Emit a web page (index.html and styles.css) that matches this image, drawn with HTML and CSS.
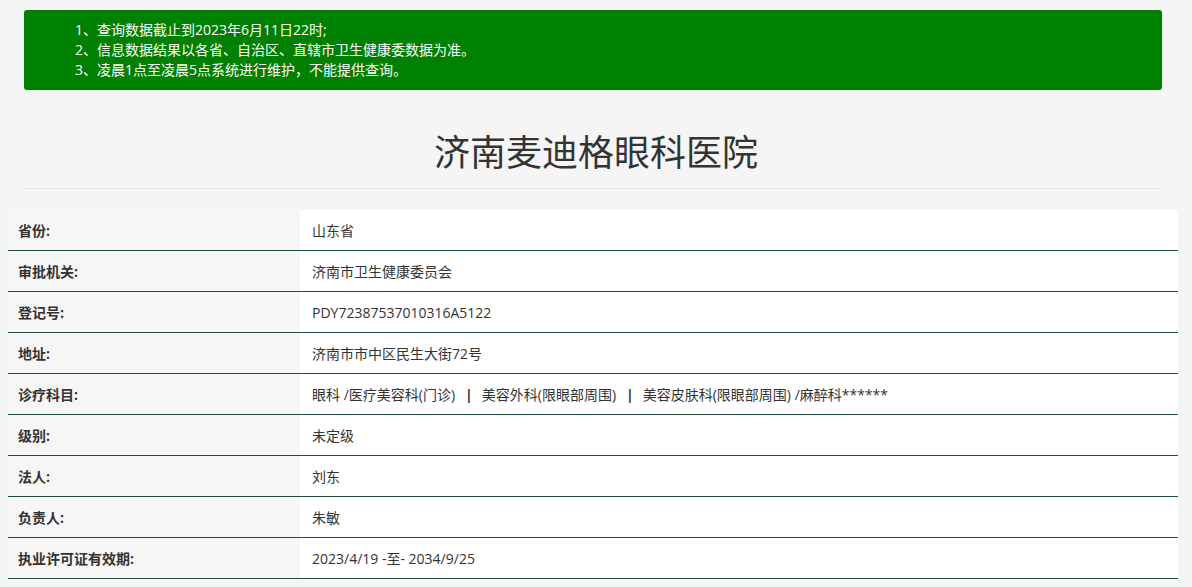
FILE: index.html
```html
<!DOCTYPE html>
<html lang="zh-CN">
<head>
<meta charset="utf-8">
<title>济南麦迪格眼科医院</title>
<link rel="stylesheet" href="styles.css">
</head>
<body>
<div class="page">
  <div class="notice">
    <p>1、查询数据截止到2023年6月11日22时;</p>
    <p>2、信息数据结果以各省、自治区、直辖市卫生健康委数据为准。</p>
    <p>3、凌晨1点至凌晨5点系统进行维护，不能提供查询。</p>
  </div>
  <h1 class="title">济南麦迪格眼科医院</h1>
  <div class="rule"></div>
  <div class="info">
    <div class="row"><div class="label">省份:</div><div class="value">山东省</div></div>
    <div class="row"><div class="label">审批机关:</div><div class="value">济南市卫生健康委员会</div></div>
    <div class="row"><div class="label">登记号:</div><div class="value">PDY72387537010316A5122</div></div>
    <div class="row"><div class="label">地址:</div><div class="value">济南市市中区民生大街72号</div></div>
    <div class="row"><div class="label">诊疗科目:</div><div class="value">眼科 /医疗美容科(门诊)<b class="sep">|</b>美容外科(限眼部周围)<b class="sep">|</b>美容皮肤科(限眼部周围) /麻醉科******</div></div>
    <div class="row"><div class="label">级别:</div><div class="value">未定级</div></div>
    <div class="row"><div class="label">法人:</div><div class="value">刘东</div></div>
    <div class="row"><div class="label">负责人:</div><div class="value">朱敏</div></div>
    <div class="row"><div class="label">执业许可证有效期:</div><div class="value">2023/4/19 -至- 2034/9/25</div></div>
  </div>
</div>
</body>
</html>
```

FILE: styles.css
```css
html, body {
  margin: 0;
  padding: 0;
  background: #f5f5f5;
}
body {
  font-family: "Open Sans", "Noto Sans CJK SC", sans-serif;
  font-size: 14px;
  color: #333;
}
.page {
  padding-top: 10px;
}
.notice {
  margin: 0 30px 0 24px;
  background: #008000;
  border-radius: 3px;
  padding: 10px 0 10px 51px;
  color: #fff;
}
.notice p {
  margin: 0;
  line-height: 20px;
}
.title {
  margin: 43px 0 0;
  text-align: center;
  font-size: 36px;
  font-weight: normal;
  line-height: 40px;
  color: #333;
}
.rule {
  margin: 15px 30px 0 24px;
  height: 1px;
  background: #e8e8e8;
}
.info {
  margin: 21px 14px 0 8px;
}
.row {
  display: flex;
  height: 40px;
  border-bottom: 1px solid #1f4d3c;
}
.label {
  width: 282px;
  padding-left: 10px;
  display: flex;
  align-items: center;
  font-weight: bold;
  background: #f6f6f6;
}
.value {
  flex: 1;
  padding-left: 12px;
  display: flex;
  align-items: center;
  background: #fff;
  white-space: pre;
}
.sep {
  font-weight: bold;
  margin: 0 9px 0 10px;
  letter-spacing: 0;
}
```
